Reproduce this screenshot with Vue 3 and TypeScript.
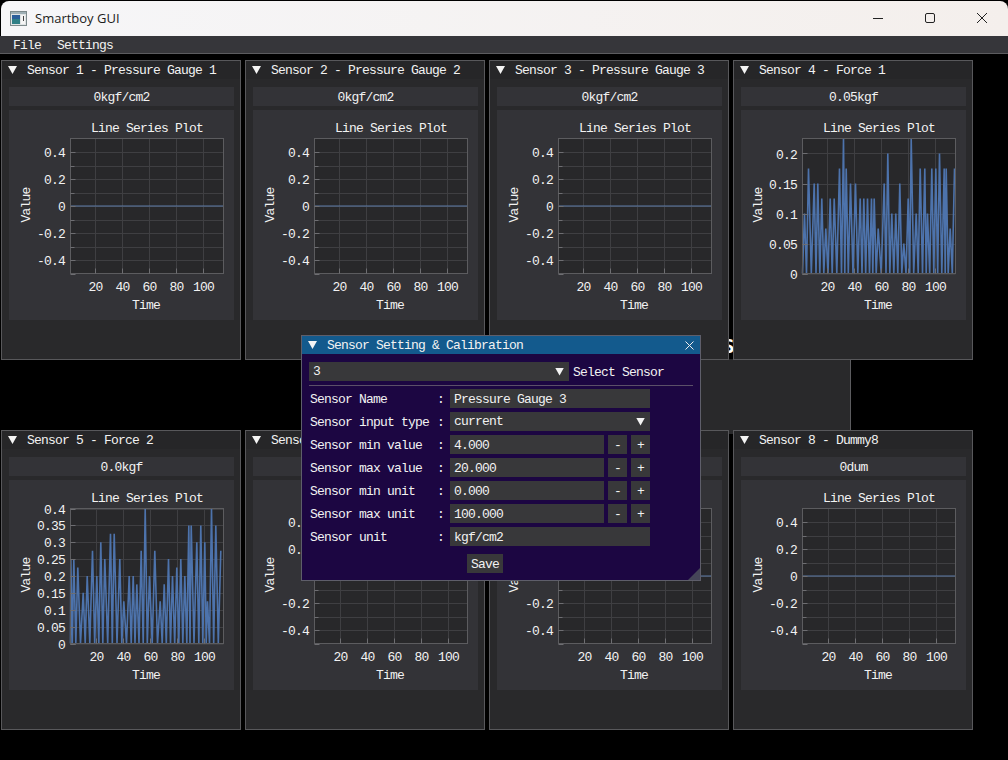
<script setup lang="ts">
type Peak = [number, number]

type Sensor = {
  title: string
  reading: string
  yMin: number
  yMax: number
  major: number[]
  minor: number[]
  peaks: Peak[]
  peakBase: number
  shift: number
}

const PLOT_LEFT = 61.5
const PLOT_RIGHT = 214.5
const PLOT_TOP = 28.5
const PLOT_BOTTOM = 163.5
const xTicks = [20, 40, 60, 80, 100]

const force1: Peak[] = [
  [208, 0.1], [220, 0.175], [237, 0.15], [248, 0.15], [260, 0.125], [272, 0.075], [285, 0.125], [297, 0.125],
  [313, 0.175], [325, 0.225], [333, 0.175], [346, 0.15], [361, 0.15], [375, 0.125], [386, 0.125], [397, 0.125],
  [409, 0.125], [417, 0.125], [429, 0.075], [447, 0.15], [458, 0.2], [470, 0.1], [482, 0.1], [494, 0.15],
  [506, 0.05], [519, 0.125], [528, 0.225], [543, 0.1], [555, 0.175], [569, 0.175], [577, 0.1], [590, 0.175],
  [602, 0.175], [613, 0.2], [627, 0.175], [633, 0.175], [645, 0.075], [658, 0.175],
]

const force2: Peak[] = [
  [213, 0.25], [222, 0.25], [234, 0.225], [250, 0.15], [262, 0.2], [278, 0.275], [291, 0.2], [303, 0.3],
  [315, 0.25], [332, 0.325], [343, 0.325], [360, 0.25], [372, 0.125], [388, 0.2], [400, 0.2], [411, 0.175],
  [424, 0.275], [436, 0.4], [449, 0.2], [465, 0.275], [481, 0.125], [493, 0.175], [506, 0.25], [518, 0.2],
  [531, 0.225], [543, 0.25], [555, 0.2], [567, 0.35], [574, 0.35], [591, 0.3], [603, 0.35], [615, 0.3],
  [623, 0.125], [635, 0.4], [648, 0.35], [663, 0.275],
]

function flat(title: string, reading: string, shift: number): Sensor {
  return {
    title,
    reading,
    yMin: -0.5,
    yMax: 0.5,
    major: [-0.4, -0.2, 0, 0.2, 0.4],
    minor: [-0.3, -0.1, 0.1, 0.3],
    peaks: [],
    peakBase: 0,
    shift,
  }
}

const sensors: Sensor[] = [
  flat('Sensor 1 - Pressure Gauge 1', '0kgf/cm2', 0),
  flat('Sensor 2 - Pressure Gauge 2', '0kgf/cm2', 0),
  flat('Sensor 3 - Pressure Gauge 3', '0kgf/cm2', 0),
  {
    title: 'Sensor 4 - Force 1',
    reading: '0.05kgf',
    yMin: 0,
    yMax: 0.225,
    major: [0, 0.05, 0.1, 0.15, 0.2],
    minor: [],
    peaks: force1,
    peakBase: 202,
    shift: 0,
  },
  {
    title: 'Sensor 5 - Force 2',
    reading: '0.0kgf',
    yMin: 0,
    yMax: 0.4,
    major: [0, 0.05, 0.1, 0.15, 0.2, 0.25, 0.3, 0.35, 0.4],
    minor: [],
    peaks: force2,
    peakBase: 212,
    shift: 1,
  },
  flat('Sensor 6 - Force 3', '0.0kgf', 1),
  flat('Sensor 7 - Dummy7', '0dum', 1),
  flat('Sensor 8 - Dummy8', '0dum', 1),
]

function yPos(s: Sensor, v: number) {
  return PLOT_BOTTOM - ((v - s.yMin) / (s.yMax - s.yMin)) * (PLOT_BOTTOM - PLOT_TOP)
}

function xPos(s: Sensor, n: number) {
  return 86.5 + s.shift + (n - 20) * 1.35
}

function yLabel(v: number) {
  if (v === 0) return '0'
  return String(Number(v.toFixed(3)))
}

function linePoints(s: Sensor) {
  if (!s.peaks.length) return `${PLOT_LEFT},${yPos(s, 0)} ${PLOT_RIGHT},${yPos(s, 0)}`
  const zero = yPos(s, 0)
  const pts: string[] = [`${PLOT_LEFT},${zero}`]
  s.peaks.forEach(([raw, v], i) => {
    const x = PLOT_LEFT + (raw - s.peakBase) / 3
    pts.push(`${x.toFixed(1)},${yPos(s, v).toFixed(1)}`)
    const next = s.peaks[i + 1]
    if (next) pts.push(`${(x + (next[0] - raw) / 6).toFixed(1)},${zero}`)
  })
  return pts.join(' ')
}

const numberRows = [
  { label: 'Sensor min value', value: '4.000' },
  { label: 'Sensor max value', value: '20.000' },
  { label: 'Sensor min unit', value: '0.000' },
  { label: 'Sensor max unit', value: '100.000' },
]
</script>

<template>
  <div class="screen">
    <header class="titlebar">
      <svg class="app-icon" width="18" height="16" viewBox="0 0 18 16">
        <rect x="0.5" y="0.5" width="16" height="14" fill="#dfe3e4" stroke="#7d8a8c" />
        <rect x="1" y="1" width="15" height="2" fill="#9fb0b6" />
        <rect x="2" y="4" width="8" height="9" fill="#2f7f86" />
        <rect x="2" y="4" width="8" height="4" fill="#2b5f9a" />
        <rect x="11" y="4" width="4" height="9" fill="#f5f5f5" />
        <rect x="13" y="5" width="1" height="5" fill="#444" />
      </svg>
      <span class="app-name">Smartboy GUI</span>
      <div class="controls">
        <svg width="12" height="12" viewBox="0 0 12 12"><path d="M1 6.5h10" stroke="#222" fill="none" /></svg>
        <svg width="12" height="12" viewBox="0 0 12 12"><rect x="1.5" y="1.5" width="9" height="9" rx="1.5" stroke="#222" fill="none" /></svg>
        <svg width="12" height="12" viewBox="0 0 12 12"><path d="M1 1l10 10M11 1L1 11" stroke="#222" fill="none" /></svg>
      </div>
    </header>

    <nav class="menubar">
      <span>File</span>
      <span>Settings</span>
    </nav>

    <main class="workspace">
      <div class="ghost-window"><span class="ghost-letter">S</span></div>

      <div class="panels">
        <section v-for="s in sensors" :key="s.title" class="panel">
          <div class="panel-title">
            <i class="tri"></i>
            <span>{{ s.title }}</span>
          </div>
          <div class="reading">{{ s.reading }}</div>
          <svg class="plot" width="225" height="210" viewBox="0 0 225 210">
            <rect width="225" height="210" fill="#333337" />
            <text class="plot-text" x="138" y="22" text-anchor="middle">Line Series Plot</text>
            <rect :x="PLOT_LEFT" :y="PLOT_TOP" :width="PLOT_RIGHT - PLOT_LEFT" :height="PLOT_BOTTOM - PLOT_TOP" fill="#28282a" />

            <g stroke="#3f3f42" fill="none">
              <line v-for="n in xTicks" :key="n" :x1="xPos(s, n)" :x2="xPos(s, n)" :y1="PLOT_TOP" :y2="PLOT_BOTTOM" />
              <line v-for="v in [...s.major, ...s.minor]" :key="v" :x1="PLOT_LEFT" :x2="PLOT_RIGHT" :y1="Math.round(yPos(s, v)) + 0.5" :y2="Math.round(yPos(s, v)) + 0.5" />
            </g>

            <polyline :points="linePoints(s)" fill="none" :stroke="s.peaks.length ? '#4d73ac' : '#5d7aa6'" :stroke-width="s.peaks.length ? 1.6 : 1" />

            <rect :x="PLOT_LEFT" :y="PLOT_TOP" :width="PLOT_RIGHT - PLOT_LEFT" :height="PLOT_BOTTOM - PLOT_TOP" fill="none" stroke="#5c5c5f" />

            <g stroke="#6e6e72" fill="none">
              <line v-for="n in xTicks" :key="n" :x1="xPos(s, n)" :x2="xPos(s, n)" :y1="PLOT_BOTTOM - 5" :y2="PLOT_BOTTOM" />
              <line v-for="v in s.major" :key="v" :x1="PLOT_LEFT" :x2="PLOT_LEFT + 5" :y1="Math.round(yPos(s, v)) + 0.5" :y2="Math.round(yPos(s, v)) + 0.5" />
              <line v-for="v in s.minor" :key="v" :x1="PLOT_LEFT" :x2="PLOT_LEFT + 4" :y1="Math.round(yPos(s, v)) + 0.5" :y2="Math.round(yPos(s, v)) + 0.5" />
              <line :x1="PLOT_LEFT" :x2="PLOT_LEFT + 5" :y1="PLOT_BOTTOM + 1" :y2="PLOT_BOTTOM + 1" />
            </g>

            <text v-for="v in s.major" :key="v" class="plot-text" x="56" :y="yPos(s, v) + 5" text-anchor="end">{{ yLabel(v) }}</text>
            <text v-for="n in xTicks" :key="n" class="plot-text" :x="xPos(s, n)" y="181" text-anchor="middle">{{ n }}</text>
            <text class="plot-text" x="137" y="199" text-anchor="middle">Time</text>
            <text class="plot-text" text-anchor="middle" transform="translate(21 95) rotate(-90)">Value</text>
          </svg>
        </section>
      </div>

      <section class="dialog">
        <div class="dialog-title">
          <i class="tri"></i>
          <span>Sensor Setting &amp; Calibration</span>
          <svg class="dialog-close" width="9" height="9" viewBox="0 0 9 9"><path d="M0.5 0.5l8 8M8.5 0.5l-8 8" stroke="#eee" fill="none" /></svg>
        </div>
        <div class="dialog-body">
          <div class="select-row">
            <div class="field combo">
              <span>3</span>
              <i class="tri"></i>
            </div>
            <span class="select-label">Select Sensor</span>
          </div>
          <hr class="divider" />
          <div class="form">
            <div class="form-row">
              <label>Sensor Name</label><b>:</b>
              <div class="field">Pressure Gauge 3</div>
            </div>
            <div class="form-row">
              <label>Sensor input type</label><b>:</b>
              <div class="field combo">
                <span>current</span>
                <i class="tri"></i>
              </div>
            </div>
            <div v-for="row in numberRows" :key="row.label" class="form-row">
              <label>{{ row.label }}</label><b>:</b>
              <div class="stepper">
                <div class="field">{{ row.value }}</div>
                <button type="button" class="step">-</button>
                <button type="button" class="step">+</button>
              </div>
            </div>
            <div class="form-row">
              <label>Sensor unit</label><b>:</b>
              <div class="field">kgf/cm2</div>
            </div>
          </div>
          <div class="save-row">
            <button type="button" class="save">Save</button>
          </div>
        </div>
        <i class="grip"></i>
      </section>
    </main>
  </div>
</template>

<style scoped>
.screen {
  position: relative;
  width: 1008px;
  height: 760px;
  overflow: hidden;
  background: #000;
  color: #f2f2f2;
  font-family: "Liberation Mono", "DejaVu Sans Mono", monospace;
  font-size: 13px;
  letter-spacing: -0.8px;
  line-height: 14px;
}

.titlebar {
  display: flex;
  align-items: center;
  height: 35px;
  margin-top: 1px;
  margin-left: 1px;
  padding-left: 9px;
  border-radius: 8px 8px 0 0;
  background: linear-gradient(90deg, #f6f6f8, #f4efec);
  color: #1c1c1c;
  font-family: "Open Sans", "Noto Sans", sans-serif;
  font-size: 13px;
  letter-spacing: 0;
}

.app-icon {
  flex: none;
}

.app-name {
  margin-left: 7px;
  margin-top: -1px;
}

.controls {
  display: flex;
  gap: 40px;
  margin-left: auto;
  margin-right: 20px;
  margin-top: -2px;
}

.menubar {
  display: flex;
  gap: 16px;
  align-items: center;
  height: 18px;
  padding-left: 13px;
  background: #36363a;
  border-bottom: 1px solid #5c5c5f;
  box-sizing: border-box;
}

.menubar span,
.panel-title span,
.dialog-title span,
.select-label,
.form-row label,
.form-row b {
  margin-top: 2px;
}

.workspace {
  position: relative;
  height: 706px;
}

.ghost-window {
  position: absolute;
  left: 330px;
  top: 305px;
  width: 521px;
  height: 75px;
  box-sizing: border-box;
  background: #29292b;
  border-right: 1px solid #5c5c5f;
}

.ghost-letter {
  position: absolute;
  left: 393px;
  top: -22px;
  font-family: "DejaVu Sans Mono", monospace;
  font-size: 19px;
  font-weight: 700;
  color: #fff;
  line-height: 18px;
}

.panels {
  position: relative;
  display: grid;
  grid-template-columns: repeat(4, 240px);
  grid-auto-rows: 300px;
  gap: 70px 4px;
  padding: 6px 0 0 1px;
}

.panel {
  box-sizing: border-box;
  padding: 0 6px 0 7px;
  background: #29292b;
  border: 1px solid #58585b;
}

.panel-title {
  display: flex;
  align-items: center;
  gap: 10px;
  height: 18px;
  margin: 0 -6px 8px -7px;
  padding-left: 6px;
  background: #262628;
}

.tri {
  display: block;
  flex: none;
  width: 9px;
  height: 8px;
  background: #f4f4f4;
  clip-path: polygon(0 0, 100% 0, 50% 100%);
}

.reading {
  height: 19px;
  margin-bottom: 4px;
  background: #333337;
  line-height: 22px;
  text-align: center;
}

.plot {
  display: block;
}

.plot-text {
  fill: #f2f2f2;
  font-family: "Liberation Mono", "DejaVu Sans Mono", monospace;
  font-size: 13px;
  letter-spacing: -0.8px;
}

.dialog {
  position: absolute;
  left: 301px;
  top: 281px;
  width: 400px;
  height: 246px;
  box-sizing: border-box;
  background: #1c0642;
  border: 1px solid #5e5e6a;
}

.dialog-title {
  display: flex;
  align-items: center;
  gap: 10px;
  height: 18px;
  padding-left: 6px;
  background: #135a8d;
}

.dialog-close {
  margin-left: auto;
  margin-right: 6px;
}

.dialog-body {
  padding: 8px 7px 0;
}

.select-row {
  display: flex;
  align-items: center;
  gap: 4px;
}

.select-row .combo {
  width: 260px;
}

.field {
  box-sizing: border-box;
  height: 19px;
  padding-left: 4px;
  background: #38383a;
  line-height: 22px;
  white-space: nowrap;
}

.combo {
  display: flex;
  align-items: center;
  justify-content: space-between;
  padding-right: 5px;
}

.divider {
  height: 1px;
  margin: 4px 0 3px;
  border: 0;
  background: #5b5068;
}

.form {
  display: flex;
  flex-direction: column;
  gap: 4px;
}

.form-row {
  display: grid;
  grid-template-columns: 127px 13px 200px;
  align-items: center;
  padding-left: 1px;
}

.form-row b {
  font-weight: 400;
}

.stepper {
  display: grid;
  grid-template-columns: 154px 19px 19px;
  gap: 4px;
}

.step,
.save {
  padding: 2px 0 0;
  border: 0;
  background: #38383a;
  color: #f2f2f2;
  font: inherit;
  letter-spacing: inherit;
}

.step {
  height: 19px;
}

.save-row {
  display: flex;
  margin-top: 8px;
  padding-left: 158px;
}

.save {
  width: 36px;
  height: 19px;
}

.grip {
  position: absolute;
  right: 0;
  bottom: 0;
  width: 12px;
  height: 12px;
  background: #454558;
  clip-path: polygon(100% 0, 100% 100%, 0 100%);
}
</style>

<style>
html,
body {
  background: #000;
}
</style>
